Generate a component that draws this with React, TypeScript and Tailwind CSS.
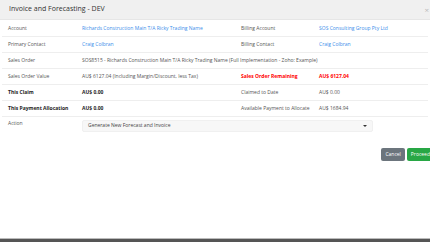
import { Fragment } from 'react';

const rows = [
  { label: 'Account', value: 'Richards Construction Main T/A Ricky Trading Name', link: true, rLabel: 'Billing Account', rValue: 'SOS Consulting Group Pty Ltd', rLink: true },
  { label: 'Primary Contact', value: 'Craig Colbran', link: true, rLabel: 'Billing Contact', rValue: 'Craig Colbran', rLink: true },
];

export default function App() {
  return (
    <div className="w-[430px] h-[242px] bg-white flex flex-col overflow-hidden text-[#555]" style={{ fontFamily: '"Open Sans", "Liberation Sans", sans-serif' }}>
      {/* header */}
      <div className="h-[20px] bg-[#f0f0f0] flex items-center justify-between pl-[9px] pr-[1px] border-b border-[#e6e6e6] shrink-0">
        <h1 className="text-[7px] text-[#333]">Invoice and Forecasting - DEV</h1>
        <span className="text-[8px] text-[#bbb] leading-none">×</span>
      </div>

      {/* details */}
      <div className="grid grid-cols-[80px_159px_78px_1fr] text-[5px] px-[2px] pt-[1px]">
        {rows.map((r) => (
          <Fragment key={r.label}>
            <div className="h-[16px] flex items-center pl-[6px] border-b border-[#eee]">{r.label}</div>
            <div className={`h-[16px] flex items-center border-b border-[#eee] ${r.link ? 'text-[#3b8eea]' : ''}`}>{r.value}</div>
            <div className="h-[16px] flex items-center border-b border-[#eee]">{r.rLabel}</div>
            <div className={`h-[16px] flex items-center border-b border-[#eee] ${r.rLink ? 'text-[#3b8eea]' : ''}`}>{r.rValue}</div>
          </Fragment>
        ))}

        <div className="h-[16px] flex items-center pl-[6px] border-b border-[#eee]">Sales Order</div>
        <div className="h-[16px] flex items-center border-b border-[#eee] col-span-3">SOS8515 - Richards Construction Main T/A Ricky Trading Name (Full Implementation - Zoho: Example)</div>

        <div className="h-[16px] flex items-center pl-[6px] border-b border-[#eee]">Sales Order Value</div>
        <div className="h-[16px] flex items-center border-b border-[#eee]">AU$ 6127.04 (Including Margin/Discount, less Tax)</div>
        <div className="h-[16px] flex items-center border-b border-[#eee] font-bold text-[#ff0000]">Sales Order Remaining</div>
        <div className="h-[16px] flex items-center border-b border-[#eee] font-bold text-[#ff0000]">AU$ 6127.04</div>

        <div className="h-[16px] flex items-center pl-[6px] border-b border-[#eee] font-bold text-[#222]">This Claim</div>
        <div className="h-[16px] flex items-center border-b border-[#eee] font-bold text-[#222]">AU$ 0.00</div>
        <div className="h-[16px] flex items-center border-b border-[#eee]">Claimed to Date</div>
        <div className="h-[16px] flex items-center border-b border-[#eee]">AU$ 0.00</div>

        <div className="h-[16px] flex items-center pl-[6px] border-b border-[#eee] font-bold text-[#222]">This Payment Allocation</div>
        <div className="h-[16px] flex items-center border-b border-[#eee] font-bold text-[#222]">AU$ 0.00</div>
        <div className="h-[16px] flex items-center border-b border-[#eee]">Available Payment to Allocate</div>
        <div className="h-[16px] flex items-center border-b border-[#eee]">AU$ 1684.94</div>

        <div className="h-[18px] flex items-start pt-[3px] pl-[6px]">Action</div>
        <div className="col-span-3 pt-[3px] pr-[55px]">
          <div className="h-[12px] bg-[#f7f7f7] border border-[#f0f0f0] rounded-[2px] flex items-center justify-between px-[5px] text-[#444]">
            <span>Generate New Forecast and Invoice</span>
            <svg width="4" height="2" viewBox="0 0 4 2"><path d="M0 0h4L2 2z" fill="#333" /></svg>
          </div>
        </div>
      </div>

      {/* footer buttons */}
      <div className="flex justify-end gap-[2px] pt-[13px] shrink-0 -mr-[4px]">
        <button className="h-[13px] px-[4px] bg-[#6c757d] text-white text-[5px] rounded-[2px]">Cancel</button>
        <button className="h-[13px] px-[4px] bg-[#28a745] text-white text-[5px] rounded-[2px]">Proceed</button>
      </div>

      <div className="flex-1" />
      <div className="h-[4px] shrink-0 bg-[#555] border-t border-[#bbb]" />
    </div>
  );
}
